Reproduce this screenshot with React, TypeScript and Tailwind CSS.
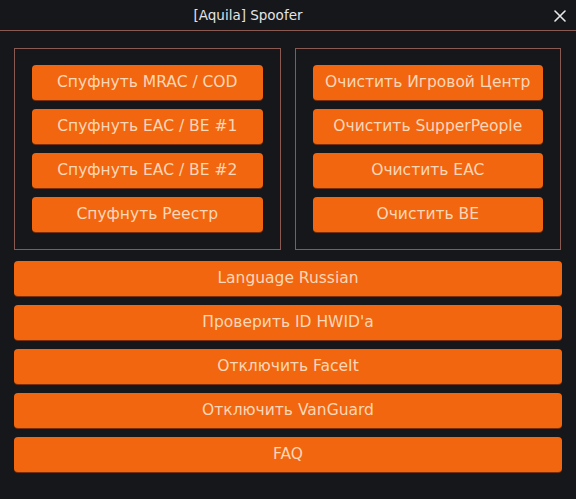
import React from "react";

const leftButtons = ["Спуфнуть MRAC / COD", "Спуфнуть EAC / BE #1", "Спуфнуть EAC / BE #2", "Спуфнуть Реестр"];
const rightButtons = ["Очистить Игровой Центр", "Очистить SupperPeople", "Очистить EAC", "Очистить BE"];
const wideButtons = ["Language Russian", "Проверить ID HWID'a", "Отключить FaceIt", "Отключить VanGuard", "FAQ"];

function OrangeButton({ label }: { label: string }) {
    return (
        <button className="h-[35px] w-full rounded-[4px] bg-[#f2660f] text-[15.5px] text-[#fcd7b8] shadow-[0_1px_0_#7a2f05]">
            {label}
        </button>
    );
}

export default function App() {
    return (
        <div
            className="w-[576px] h-[499px] bg-[#16171b] flex flex-col"
            style={{ fontFamily: "Verdana, 'DejaVu Sans', sans-serif" }}
        >
            <div className="relative h-[31px] flex items-center justify-center pr-[80px] border-b border-[#8a5a52] text-[13.5px] text-[#e4e4e4]">
                [Aquila] Spoofer
                <svg className="absolute right-[10px] top-[10px]" width="12" height="12" viewBox="0 0 12 12">
                    <path d="M1 1 L11 11 M11 1 L1 11" stroke="#e8e8e8" strokeWidth="1.6" strokeLinecap="round" />
                </svg>
            </div>

            <div className="flex flex-col px-[14px] pt-[17px]">
                <div className="flex gap-[14px] pr-[1px]">
                    <div className="flex-1 border border-[#8a5a52] px-[17px] pt-[16px] pb-[17px] flex flex-col gap-[9px]">
                        {leftButtons.map((b) => (
                            <OrangeButton key={b} label={b} />
                        ))}
                    </div>
                    <div className="flex-1 border border-[#8a5a52] px-[17px] pt-[16px] pb-[17px] flex flex-col gap-[9px]">
                        {rightButtons.map((b) => (
                            <OrangeButton key={b} label={b} />
                        ))}
                    </div>
                </div>
                <div className="flex flex-col gap-[9px] mt-[11px]">
                    {wideButtons.map((b) => (
                        <OrangeButton key={b} label={b} />
                    ))}
                </div>
            </div>
        </div>
    );
}
